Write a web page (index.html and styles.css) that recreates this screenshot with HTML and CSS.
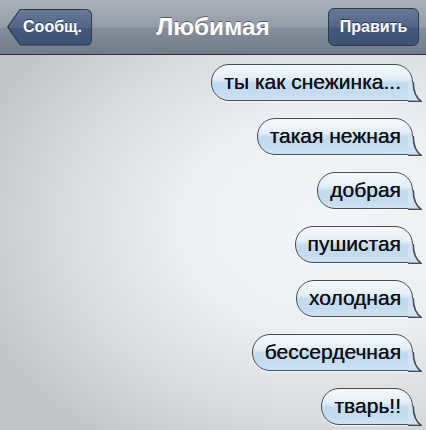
FILE: index.html
```html
<html>
<head>
  <meta charset="utf-8">
  <meta name="viewport" content="width=device-width, initial-scale=1.0">
  <link rel="stylesheet" href="styles.css">
</head>
<body>

  <!-- bubble tail, reused by every message -->
  <svg class="defs" width="0" height="0">
    <symbol id="tail" viewBox="0 0 14 20">
      <path d="M0 0 H5.25 C5.25 9 7.5 15.5 13.5 19.6 Q7 19.25 0 19.25 Z" fill="#d0e3f2"/>
      <path d="M5.25 0 C5.25 9 7.5 15.5 13.5 19.6 Q7 19.25 0 19.25" fill="none" stroke="#464c55" stroke-width="1.6"/>
    </symbol>
  </svg>

  <div class="screen">
    <header class="navbar">
      <a class="back"><span class="back-face">Сообщ.</span></a>
      <h1 class="title">Любимая</h1>
      <a class="edit">Править</a>
    </header>

    <main class="thread">
      <div class="bubble">ты как снежинка...<svg class="tail"><use href="#tail"/></svg></div>
      <div class="bubble">такая нежная<svg class="tail"><use href="#tail"/></svg></div>
      <div class="bubble">добрая<svg class="tail"><use href="#tail"/></svg></div>
      <div class="bubble">пушистая<svg class="tail"><use href="#tail"/></svg></div>
      <div class="bubble">холодная<svg class="tail"><use href="#tail"/></svg></div>
      <div class="bubble">бессердечная<svg class="tail"><use href="#tail"/></svg></div>
      <div class="bubble">тварь!!<svg class="tail"><use href="#tail"/></svg></div>
    </main>
  </div>

</body>
</html>
```

FILE: styles.css
```css
/* page frame */
html, body {
  margin: 0;
  padding: 0;
}
body {
  width: 426px;
  height: 430px;
  overflow: hidden;
  font-family: "Liberation Sans", Arial, sans-serif;
}
.defs {
  position: absolute;
}
.screen {
  display: flex;
  flex-direction: column;
  height: 430px;
}

/* top bar */
.navbar {
  display: grid;
  grid-template-columns: 1fr auto 1fr;
  align-items: center;
  height: 55px;
  padding: 0 7px;
  box-sizing: border-box;
  background: linear-gradient(to bottom, #aab1ba 0%, #939ca7 50%, #858f9b 52%, #727c89 100%);
  border-bottom: 1px solid #2e3238;
  box-shadow: 0 1px 0 #d9dcdf;
}
.title {
  margin: 0;
  color: #fff;
  font-size: 24.5px;
  font-weight: bold;
  text-shadow: 0 -1px 0 rgba(0, 0, 0, 0.45);
}

/* bar buttons */
.back, .edit {
  color: #fff;
  font-size: 16px;
  font-weight: bold;
  text-shadow: 0 -1px 0 rgba(0, 0, 0, 0.5);
}
.back {
  justify-self: start;
  display: flex;
  width: 85px;
  height: 37px;
  background: #2f3a4a;
  border-radius: 0 6px 6px 0;
  clip-path: polygon(13px 0, 100% 0, 100% 100%, 13px 100%, 0 50%);
}
.back-face {
  flex: 1;
  display: flex;
  align-items: center;
  justify-content: flex-end;
  padding-right: 9px;
  margin: 1px 1px 1px 1.5px;
  border-radius: 0 5px 5px 0;
  background: linear-gradient(to bottom, #677a96 0%, #51658a 50%, #45597c 52%, #3e5274 100%);
  clip-path: polygon(12px 0, 100% 0, 100% 100%, 12px 100%, 0 50%);
}
.edit {
  justify-self: end;
  display: flex;
  align-items: center;
  justify-content: center;
  width: 91px;
  height: 38px;
  box-sizing: border-box;
  border: 1px solid #2f3a4a;
  border-radius: 6px;
  background: linear-gradient(to bottom, #677a96 0%, #51658a 50%, #45597c 52%, #3e5274 100%);
}

/* message list */
.thread {
  flex: 1;
  display: flex;
  flex-direction: column;
  align-items: flex-end;
  gap: 17px;
  padding: 9px 13px 0 0;
  background: radial-gradient(ellipse 90% 75% at 78% 45%, #f3f6f8 0%, #eceeef 40%, #d6d7d9 75%, #c1c3c5 100%);
}
.bubble {
  position: relative;
  display: flex;
  align-items: center;
  height: 37px;
  box-sizing: border-box;
  padding: 0 11px 1px 12px;
  color: #111;
  font-size: 21px;
  border: 1.6px solid #464c55;
  border-radius: 18px 18px 0 18px;
  background: linear-gradient(to bottom, #f5f9fc 0%, #e3eef7 40%, #c0daef 52%, #c4dcf0 80%, #d0e3f2 100%);
  box-shadow: 0 1px 1px rgba(255, 255, 255, 0.8);
  text-shadow: 0 0 0.4px #111;
}
.tail {
  position: absolute;
  right: -9.5px;
  bottom: -1.6px;
  width: 14px;
  height: 20px;
  overflow: visible;
}
```
